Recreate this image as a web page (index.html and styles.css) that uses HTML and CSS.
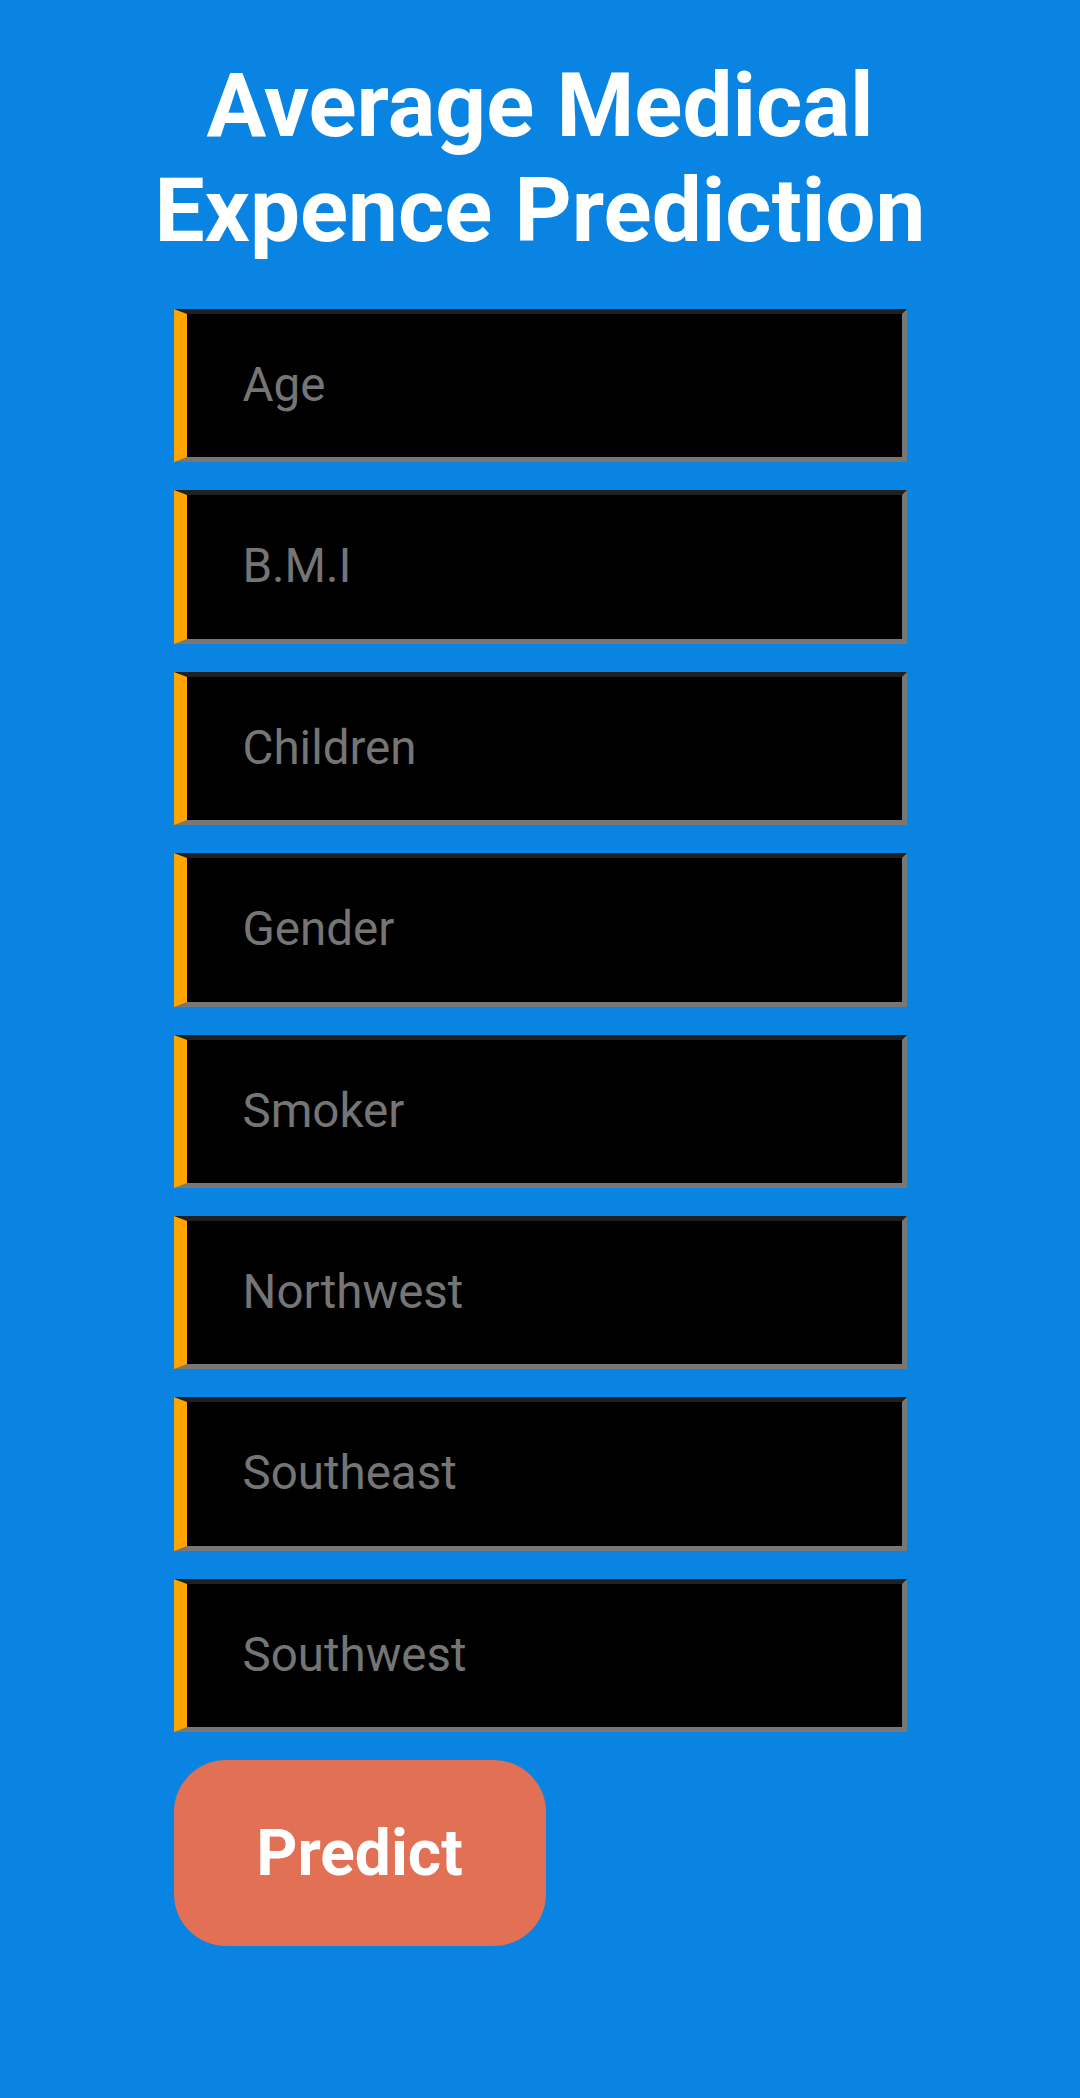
FILE: index.html
```html
<!DOCTYPE html>
<html lang="en">
<head>
<meta charset="utf-8">
<title>Average Medical Expence Prediction</title>
<link rel="stylesheet" href="styles.css">
</head>
<body>
<main class="page">
  <h1 class="title">Average Medical Expence Prediction</h1>
  <form class="form">
    <div class="field"><span class="ph">Age</span></div>
    <div class="field"><span class="ph">B.M.I</span></div>
    <div class="field"><span class="ph">Children</span></div>
    <div class="field"><span class="ph">Gender</span></div>
    <div class="field"><span class="ph">Smoker</span></div>
    <div class="field"><span class="ph">Northwest</span></div>
    <div class="field"><span class="ph">Southeast</span></div>
    <div class="field"><span class="ph">Southwest</span></div>
    <div class="actions"><button type="button" class="btn">Predict</button></div>
  </form>
</main>
</body>
</html>
```
FILE: styles.css
```css
html, body {
  margin: 0;
  padding: 0;
  background: #0984e3;
}
body {
  min-height: 2098px;
  font-family: Roboto, "Liberation Sans", sans-serif;
}
.page {
  padding-top: 53px;
}
.title {
  margin: 0 auto;
  max-width: 900px;
  text-align: center;
  color: #ffffff;
  font-size: 89px;
  font-weight: 700;
  line-height: normal;
}
.form {
  width: 733px;
  margin: 46px auto 0;
  display: flex;
  flex-direction: column;
  gap: 28px;
}
.field {
  box-sizing: border-box;
  height: 153.4px;
  background: #000;
  border-style: solid;
  border-width: 5px 5px 5px 13px;
  border-color: #202020 #777777 #777777 #ffa500;
  display: flex;
  align-items: center;
  padding-left: 56px;
}
.ph {
  font-size: 47.5px;
  color: #757575;
  line-height: 1;
}
.actions {
  display: flex;
}
.btn {
  width: 372px;
  height: 186px;
  border: none;
  border-radius: 52px;
  background: #e17055;
  color: #ffffff;
  font-family: Roboto, "Liberation Sans", sans-serif;
  font-size: 64px;
  font-weight: 700;
  padding: 0;
  cursor: pointer;
}
```
